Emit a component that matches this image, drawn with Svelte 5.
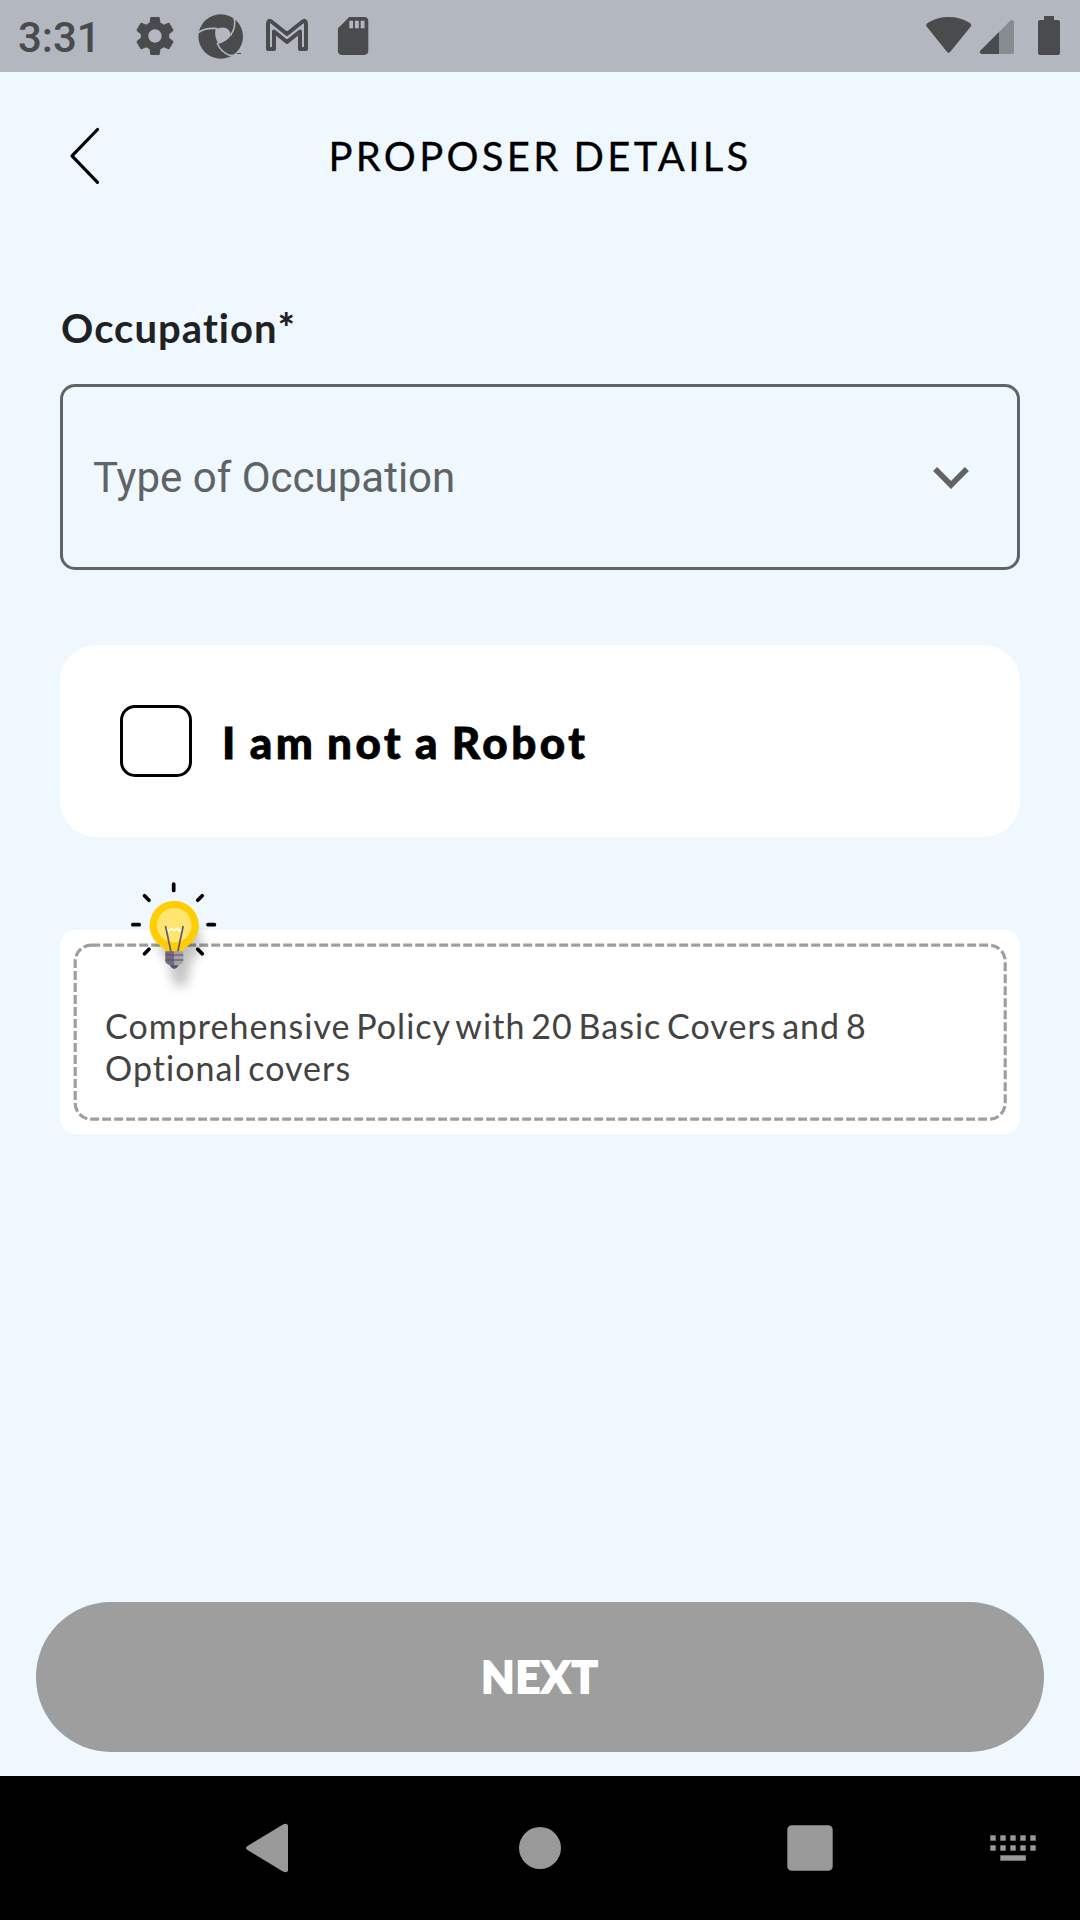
<script>
  const dots = [0, 1, 2, 3, 4];
</script>

<div class="screen">
  <div class="status">
    <span class="clock">3:31</span>
    <svg class="status-left" viewBox="120 0 260 72" width="260" height="72">
      <g fill="#494b4d">
        <path transform="translate(132.2 13.2) scale(1.9)" d="M19.43 12.98c.04-.32.07-.64.07-.98s-.03-.66-.07-.98l2.11-1.65c.19-.15.24-.42.12-.64l-2-3.46c-.12-.22-.39-.3-.61-.22l-2.49 1c-.52-.4-1.08-.73-1.69-.98l-.38-2.65C14.46 2.18 14.25 2 14 2h-4c-.25 0-.46.18-.49.42l-.38 2.65c-.61.25-1.17.59-1.69.98l-2.49-1c-.23-.09-.49 0-.61.22l-2 3.46c-.13.22-.07.49.12.64l2.11 1.65c-.04.32-.07.65-.07.98s.03.66.07.98l-2.11 1.65c-.19.15-.24.42-.12.64l2 3.46c.12.22.39.3.61.22l2.49-1c.52.4 1.08.73 1.69.98l.38 2.65c.03.24.24.42.49.42h4c.25 0 .46-.18.49-.42l.38-2.65c.61-.25 1.17-.59 1.69-.98l2.49 1c.23.09.49 0 .61-.22l2-3.46c.12-.22.07-.49-.12-.64l-2.11-1.65zM12 15.5c-1.93 0-3.5-1.57-3.5-3.5s1.57-3.5 3.5-3.5 3.5 1.57 3.5 3.5-1.57 3.5-3.5 3.5z" />
        <circle cx="220.7" cy="36.5" r="22.3" />
        <path transform="translate(330.3 13.1) scale(1.9)" d="M18 2h-8L4.02 8 4 20c0 1.1.9 2 2 2h12c1.100 0 2-.9 2-2V4c0-1.100-.9-2-2-2zm-6 6h-2V4h2v4zm3 0h-2V4h2v4zm3 0h-2V4h2v4z" />
      </g>
      <path d="M215.500 29q6-2.500 10.500-1 4 2 5 7-3 6-12.500 9-4.500-7-3-15z" fill="#b3b8c0" />
      <g fill="none" stroke="#b3b8c0" stroke-width="1.600">
        <path d="M198 33q6-5.500 19-4.500" />
        <path d="M234 17q2.500 10-3.500 18.500" />
        <path d="M217 43q4 9 12 12 4 1 8 0" />
      </g>
      <path d="M234 54h8v5h-8z" fill="#b3b8c0" />
      <path d="M237 53.500h4" stroke="#494b4d" />
      <path d="M268 49V24q0-5 4-2l15 12 15-12q4-3 4 2v25h-6V31.500L287 42l-13-10.500V49z" fill="none" stroke="#494b4d" stroke-width="4" stroke-linejoin="round" />
    </svg>
    <svg class="status-right" viewBox="920 0 160 72" width="160" height="72">
      <g fill="#494b4d">
        <path d="M926.600 26.500Q925.500 24.500 928 22.800Q937 17 948.700 17T969.500 22.800Q972 24.500 970.800 26.500L950.500 51.500Q948.500 54 946.700 51.500z" />
        <path d="M999 32V54h-17q-3.500-.5-1.500-3.500z" />
        <path d="M1044 16h10v4h4q2 0 2 2v31q0 2-2 2h-18q-2 0-2-2V22q0-2 2-2h4z" />
      </g>
      <path d="M999 32l11.500-11.500q3-1.500 3.500 1.500v30q0 2-2 2h-13z" fill="#878c90" />
    </svg>
  </div>

  <header>
    <svg class="back" viewBox="0 0 36 64" width="36" height="64">
      <path d="M31.500 5.500 6 31.800 31.500 58.300" fill="none" stroke="#000" stroke-width="3.200" stroke-linecap="round" stroke-linejoin="round" />
    </svg>
    <h1>PROPOSER DETAILS</h1>
  </header>

  <main>
    <div class="label"><span>Occupation</span><span class="star">*</span></div>
    <div class="select">
      <span>Type of Occupation</span>
      <svg viewBox="0 0 36 22" width="36" height="22">
        <path d="M2.100 2 18 18 33.900 2" fill="none" stroke="#636363" stroke-width="5.700" />
      </svg>
    </div>

    <div class="robot">
      <i class="box"></i>
      <span>I am not a Robot</span>
    </div>

    <div class="tip">
      <svg class="dashes" viewBox="0 0 960 204" width="960" height="204">
        <rect x="15.200" y="15.200" width="930" height="174" rx="16" fill="none" stroke="#9e9e9e" stroke-width="3.200" stroke-dasharray="9 3" />
      </svg>
      <svg class="bulb" viewBox="120 870 120 140" width="120" height="140">
        <defs>
          <filter id="soft" x="-80%" y="-60%" width="260%" height="220%"><feGaussianBlur stdDeviation="6" /></filter>
          <linearGradient id="base" x1="0" x2="1" y1="0" y2="0">
            <stop offset=".5" stop-color="#716a80" /><stop offset=".5" stop-color="#a3a1a9" />
          </linearGradient>
        </defs>
        <g filter="url(#soft)" opacity=".24">
          <path d="M180 920a22 22 0 0 1 14 38q-5 5-5 14 0 14-9 15-8-1-9-15 0-9-5-14a22 22 0 0 1 14-38z" />
        </g>
        <g stroke="#000" stroke-width="3.700" stroke-linecap="round">
          <path d="M173.700 884v6.500M144.500 895.700l4.500 4.500M202.200 895.700l-4.500 4.500M132.800 924.700h6.400M208 924.700h6.400M144.500 953.700l4.500-4.500M202.200 953.700l-4.500-4.500" />
        </g>
        <path d="M174.200 901a24.500 24.500 0 0 1 12 45.900q-3 1.800-3.200 4.600h-17.500q-.2-2.800-3.300-4.600A24.500 24.500 0 0 1 174.200 901z" fill="#ffcd00" />
        <circle cx="174.200" cy="925.300" r="17.300" fill="#ffe571" />
        <path d="M166 928.500l3 2.500 2.500-2.500 2.700 2.200 2.700-2.200 2.500 2.500 3-2.500" fill="none" stroke="#fff" stroke-width="1.600" />
        <path d="M165.500 926l5.500 26M183.200 926l-5.500 26" fill="none" stroke="#615b6c" stroke-width="1.700" />
        <path d="M165.300 951.300h18v10q-.5 2.500-5 4.200-1.500 3.200-4 3.200t-4-3.200q-4.500-1.700-5-4.200z" fill="url(#base)" />
        <path d="M165.300 955h18M165.300 960h18" stroke="#5b5268" stroke-width="1.400" opacity=".7" />
        <path d="M170 965.300h8.500q-1.500 3.400-4.200 3.400t-4.300-3.400z" fill="#5b5268" />
      </svg>
      <p>Comprehensive Policy with 20 Basic Covers and 8<br />Optional covers</p>
    </div>
  </main>

  <button><span>NEXT</span></button>

  <nav>
    <svg viewBox="0 1776 1080 144" width="1080" height="144" fill="#999">
      <path d="M247.500 1846 283 1824.500q5-2 5 2v43q0 4-5 2L247.500 1850q-3-2 0-4z" />
      <circle cx="540" cy="1848" r="21" />
      <rect x="787.300" y="1825.300" width="45.400" height="45.400" rx="4.500" />
      {#each dots as d}
        <rect x={990.3 + d * 10} y="1835.300" width="5.400" height="5.400" />
        <rect x={990.3 + d * 10} y="1845.300" width="5.400" height="5.400" />
      {/each}
      <rect x="1000.300" y="1855.300" width="25.500" height="5.400" />
    </svg>
  </nav>
</div>

<style>
  :global(body) { margin: 0; }
  .screen {
    width: 1080px;
    height: 1920px;
    display: flex;
    flex-direction: column;
    background: #eff7ff;
    font-family: Lato, "Open Sans", sans-serif;
    font-variant-ligatures: none;
    color: #000;
    overflow: hidden;
  }
  .status {
    height: 72px;
    flex: none;
    display: flex;
    align-items: center;
    background: #b3b8c0;
  }
  .clock {
    width: 102px;
    padding-left: 18px;
    padding-top: 4px;
    font: 500 42px/50px Roboto, sans-serif;
    color: #494b4d;
  }
  .status-right { margin-left: auto; }
  header {
    height: 168px;
    flex: none;
    display: grid;
    grid-template-columns: 66px 1fr 66px;
    align-items: start;
  }
  .back { margin: 52px 0 0 66px; }
  h1 {
    margin: 60px 0 0;
    font-size: 40px;
    line-height: 48px;
    font-weight: 400;
    letter-spacing: 3.300px;
    word-spacing: -1.500px;
    -webkit-text-stroke: .3px #000;
    text-align: center;
    white-space: nowrap;
  }
  main { padding: 0 60px; }
  .label {
    height: 144px;
    padding: 64px 0 0 1px;
    box-sizing: border-box;
    font-size: 40px;
    line-height: 48px;
    font-weight: 700;
    letter-spacing: 1.050px;
    color: #1f2123;
  }
  .star { font-weight: 900; }
  .select {
    height: 186px;
    box-sizing: border-box;
    border: 3px solid #636363;
    border-radius: 15px;
    padding: 2px 48px 0 30px;
    display: flex;
    align-items: center;
    justify-content: space-between;
    font: 400 42px/50px Roboto, sans-serif;
    color: #5f6366;
  }
  .robot {
    height: 192px;
    margin-top: 75px;
    box-sizing: border-box;
    padding-left: 60px;
    border-radius: 36px;
    background: #fff;
    display: flex;
    align-items: center;
    gap: 30px;
    font-size: 44px;
    line-height: 54px;
    font-weight: 900;
    letter-spacing: 3.450px;
    word-spacing: -3px;
    -webkit-text-stroke: .8px #000;
  }
  .robot span { padding-top: 2px; }
  .box {
    width: 72px;
    height: 72px;
    box-sizing: border-box;
    border: 3px solid #000;
    border-radius: 15px;
  }
  .tip {
    position: relative;
    height: 204px;
    margin-top: 93px;
    box-sizing: border-box;
    padding: 75px 0 0 45px;
    border-radius: 15px;
    background: #fff;
  }
  .dashes { position: absolute; left: 0; top: 0; }
  .bulb { position: absolute; left: 60px; top: -60px; }
  p {
    margin: 0;
    font-size: 34px;
    line-height: 42px;
    letter-spacing: 1.030px;
    word-spacing: -4px;
    color: #434343;
    white-space: nowrap;
  }
  button {
    margin: auto 36px 24px;
    height: 150px;
    flex: none;
    border: 0;
    border-radius: 75px;
    background: #9e9e9e;
    color: #fff;
    font: 900 43px/52px Lato, sans-serif;
    letter-spacing: 1.100px;
    -webkit-text-stroke: 1.800px #fff;
    padding: 0;
  }
  nav { height: 144px; flex: none; background: #000; }
  nav svg { display: block; }
</style>
